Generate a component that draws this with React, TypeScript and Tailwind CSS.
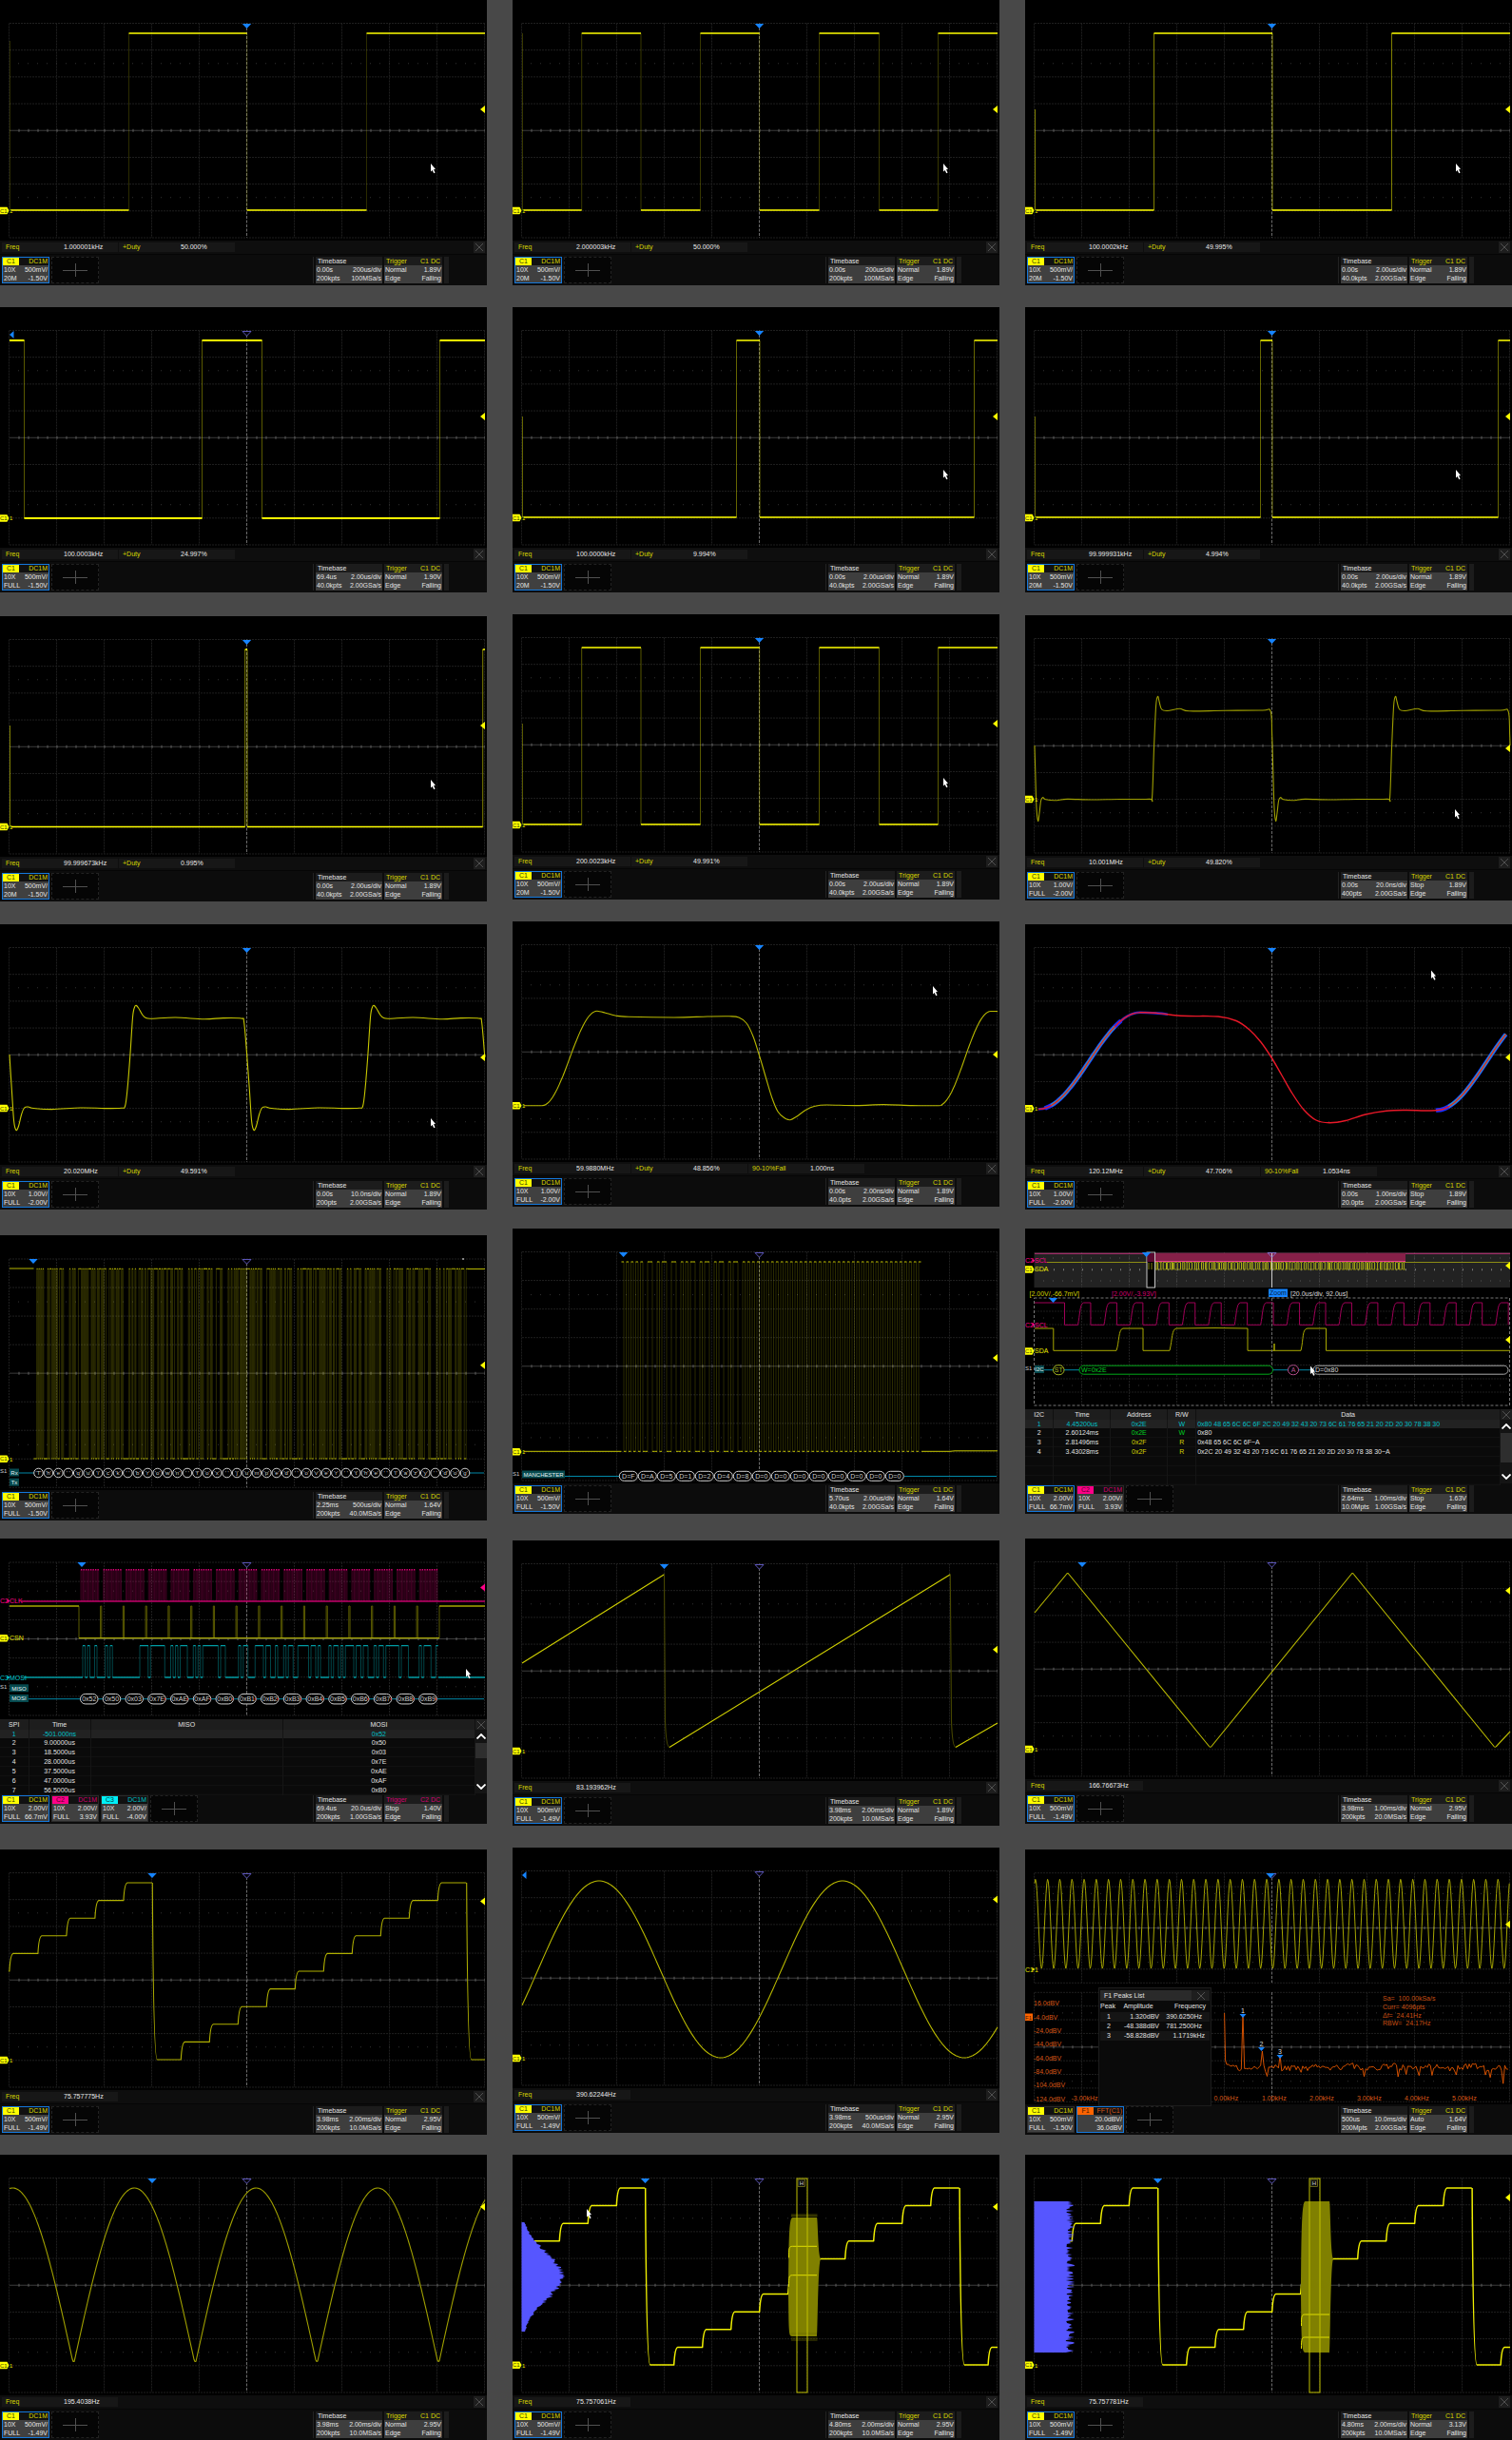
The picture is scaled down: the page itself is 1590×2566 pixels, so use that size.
import React from "react";

type Pt = [number, number];

const LEFT = 10;
const RIGHT = 510;
const MID = 260;
const YELLOW = "#ffff00";
const PINK = "#ff0088";
const CYAN = "#00c8d0";

function rng(seed: number) {
  let s = seed;
  return () => {
    s = (s * 1664525 + 1013904223) % 4294967296;
    return s / 4294967296;
  };
}

const line = (pts: Pt[]) => "M" + pts.map(([x, y]) => `${x.toFixed(1)} ${y.toFixed(1)}`).join("L");

function smooth(pts: Pt[]) {
  let d = `M${pts[0][0]} ${pts[0][1]}`;
  for (let i = 0; i < pts.length - 1; i++) {
    const p0 = pts[Math.max(0, i - 1)];
    const p1 = pts[i];
    const p2 = pts[i + 1];
    const p3 = pts[Math.min(pts.length - 1, i + 2)];
    d += `C${(p1[0] + (p2[0] - p0[0]) / 6).toFixed(1)} ${(p1[1] + (p2[1] - p0[1]) / 6).toFixed(1)} ${(p2[0] - (p3[0] - p1[0]) / 6).toFixed(1)} ${(p2[1] - (p3[1] - p1[1]) / 6).toFixed(1)} ${p2[0].toFixed(1)} ${p2[1].toFixed(1)}`;
  }
  return d;
}

/* ---------- plot furniture ---------- */

function Grid({ top = 24.5, bottom = 250, mid = true }: { top?: number; bottom?: number; mid?: boolean }) {
  const div = (bottom - top) / 8;
  const cy = (top + bottom) / 2;
  return (
    <g fill="none">
      {[0, 1, 2, 3, 5, 6, 7, 8].map((i) => (
        <path key={i} d={`M${LEFT} ${top + i * div}H${RIGHT}`} stroke="#1f1f1f" strokeDasharray="2 1" />
      ))}
      {[0, 1, 2, 3, 4, 6, 7, 8, 9, 10].map((i) => (
        <path key={i} d={`M${LEFT - 0.5 + i * 50} ${top}V${bottom}`} stroke="#1f1f1f" strokeDasharray="2 1" />
      ))}
      {[1.5, 6.5].map((i) => (
        <path key={i} d={`M${LEFT + 9} ${top + i * div}H${RIGHT}`} stroke="#333" strokeDasharray="1 9" />
      ))}
      <path d={`M${LEFT} ${cy}H${RIGHT}`} stroke="#3c3c3c" />
      <path d={`M${LEFT + 9.5} ${cy}H${RIGHT}`} stroke="#606060" strokeWidth="3" strokeDasharray="1 9" />
      {mid && <MidLine y1={top} y2={bottom} />}
    </g>
  );
}

const MidLine = ({ y1, y2 }: { y1: number; y2: number }) => (
  <path d={`M${MID - 0.5} ${y1}V${y2}`} stroke="#6c6c6c" strokeDasharray="3 1.5" fill="none" />
);

const TrigPos = ({ x, y = 25 }: { x: number; y?: number }) => (
  <path d={`M${x - 4.7} ${y}h9.4l-4.7 5z`} fill="#1684ff" />
);
const TrigLeft = ({ y }: { y: number }) => <path d={`M10 ${y}l4.5 -4v8z`} fill="#1684ff" />;
const Delay = ({ x = MID - 0.5, y = 25 }: { x?: number; y?: number }) => (
  <path d={`M${x - 4.5} ${y + 0.5}h9l-4.5 4.7z`} fill="#000" stroke="#5b55b8" />
);
const Level = ({ y, color = YELLOW }: { y: number; color?: string }) => (
  <path d={`M505 ${y}l5 -4v8z`} fill={color} />
);
const Pointer = ({ x, y }: { x: number; y: number }) => (
  <path d={`M${x} ${y}l5 6l-2 .3l1.6 3.2l-1.4 .7l-1.5 -3.2l-1.7 1.5z`} fill="#fff" />
);
const Ground = ({ y, name = "1" }: { y: number; name?: string }) => (
  <g>
    <path d={`M0 ${y - 3.7}h7.5l2 3.7l-2 3.7h-7.5z`} fill={YELLOW} />
    <text x="0" y={y + 2} fontSize="6" fill="#333300">C1</text>
    <text x="10" y={y + 2.4} fontSize={name === "1" ? 6 : 7} fill="#e8e800">{name}</text>
  </g>
);
const Channel = ({ y, tag, name, color }: { y: number; tag: string; name: string; color: string }) => (
  <g fontSize="7" fill={color}>
    <text x="0" y={y + 2.5}>{tag}</text>
    <path d={`M7.5 ${y - 2}l3 2l-3 2z`} />
    <text x="10" y={y + 2.5}>{name}</text>
  </g>
);

/* ---------- traces ---------- */

function Square({ edges, start, high = 35, low = 221, dim = 0.3, width = 1.5, spur = 115 }: { edges: number[]; start: boolean; high?: number; low?: number; dim?: number; width?: number; spur?: number }) {
  let level = start;
  let flats = "";
  let x = start ? LEFT : LEFT + 2;
  for (const e of [...edges, RIGHT]) {
    flats += `M${x} ${level ? high : low}H${e}`;
    x = e;
    level = !level;
  }
  return (
    <g fill="none" stroke={YELLOW}>
      {!start && <path d={`M${LEFT + 0.5} ${spur}V${low}`} strokeOpacity={dim} />}
      <path d={edges.map((e) => `M${e} ${high}V${low}`).join("")} strokeOpacity={dim} />
      <path d={flats} strokeWidth={width} />
    </g>
  );
}

const Trace = ({ d, color = "#b8b800", width = 1.1 }: { d: string; color?: string; width?: number }) => (
  <path d={d} fill="none" stroke={color} strokeWidth={width} strokeLinejoin="round" />
);

const ring20: Pt[] = [
  [-6, 99], [-3, 103], [0, 137], [3, 178], [5, 207], [7.4, 216.5], [10, 212], [13, 200], [16, 193], [20, 192], [26, 193.5], [45, 194.6], [75, 193], [100, 193.6], [118, 193.3], [122, 191], [124.5, 172], [127.3, 137], [130, 97], [132, 87], [133.6, 85.4], [136, 88], [140, 95], [144, 98.6], [150, 99.2], [175, 98], [205, 99.8], [225, 98.6],
];
const ring10: Pt[] = [
  [-1.5, 101], [0, 125], [1.2, 165], [2.4, 203], [4, 216.5], [5.4, 208], [7, 195], [9, 191.6], [12, 193.8], [22, 194.8], [35, 193.4], [60, 194], [90, 193.5], [121, 193.4], [124, 191], [126, 137], [128, 95], [129.8, 85.4], [131.5, 91], [134, 99], [140, 100.5], [153, 98.3], [163, 100.8], [200, 100.3], [240, 100],
];
function ringing(shape: Pt[]) {
  const pts: Pt[] = [];
  for (const base of [9.6, 259.6, 509.6]) for (const [x, y] of shape) if (x + base >= LEFT && x + base <= RIGHT) pts.push([x + base, y]);
  return smooth([[LEFT, 137], ...pts, [RIGHT, 137]]);
}

/* half-cosine ramp from (x0, y0) to (x1, y1), cut at the right border of the grid */
function ramp(x0: number, y0: number, x1: number, y1: number): Pt[] {
  const pts: Pt[] = [];
  for (let i = 0; i <= 16; i++) {
    const x = x0 + ((x1 - x0) * i) / 16;
    if (x <= RIGHT) pts.push([x, (y0 + y1) / 2 + ((y0 - y1) / 2) * Math.cos((Math.PI * i) / 16)]);
  }
  return pts;
}

const pulse60: Pt[] = [
  [12, 193.7], [24, 193.8], ...ramp(31, 193.7, 89, 94.3), [97, 96], [108, 99], [122, 100.3], [170, 101], [205, 100], [228, 99.8], [238, 101], [246, 107], [253, 121], [259.5, 141], [266, 163], [273, 186], [279, 200], [286, 206.8], [292, 208.7], [299, 205], [308, 198.5], [318, 194.3], [330, 193], [362, 193.6], [390, 192.6], [420, 193.6], ...ramp(448, 193.7, 503, 94.5), [510, 94.6],
];
const rise120a = ramp(14, 194.5, 121, 92.8);
const rise120b = ramp(432, 195.7, 539, 92.8);
const pulse120: Pt[] = [
  ...rise120a, [126, 92.8], [140, 93.6], [155, 95.5], [172, 96.5], [203, 97], [222, 101.5], [236, 111], [248, 124], [259, 140], [270, 159], [281, 178], [293, 195], [306, 206], [320, 208.7], [337, 206.5], [358, 200], [380, 196.3], [400, 195.5], [420, 196], ...rise120b,
];

function stairs(drop: number, low = 221, step = 18.6) {
  const y = (k: number) => low - step * k;
  let d = "";
  for (const base of [drop - 330.4, drop, drop + 330.4]) {
    d += `M${base} ${y(10)}Q${base + 1} ${low} ${base + 5} ${low}H${base + 30}`;
    for (let k = 1; k <= 10; k++) {
      const x = base + 30 * k;
      d += `V${y(k - 1)}q1 ${-step + 0.5} 4 ${-step}H${Math.min(x + 30, base + 330.4)}`;
    }
  }
  return d;
}

function sample(f: (x: number) => number, step = 2) {
  const pts: Pt[] = [];
  for (let x = LEFT; x <= RIGHT; x += step) pts.push([x, f(x)]);
  return line(pts);
}

/* ---------- decoded serial frames ---------- */

function Capsule({ x, y, w, h = 10, label, color = "#d0d0d0", size = 7 }: { x: number; y: number; w: number; h?: number; label: string; color?: string; size?: number }) {
  return (
    <g>
      <rect x={x} y={y - h / 2} width={w} height={h} rx={Math.min(w, h) / 2} fill="#000" stroke={color} strokeWidth="1" />
      <text x={x + w / 2} y={y + size * 0.36} textAnchor="middle" fontSize={size} fill={color}>{label}</text>
    </g>
  );
}
const Tag = ({ x, y, w, label }: { x: number; y: number; w: number; label: string }) => (
  <g>
    <rect x={x} y={y - 4} width={w} height="8" fill="#064a4f" />
    <text x={x + w / 2} y={y + 2.2} textAnchor="middle" fontSize="6" fill="#e4f0f0">{label}</text>
  </g>
);
const Bus = ({ y }: { y: number }) => <text x="0" y={y + 2} fontSize="6" fill="#ccc">S1</text>;

function bitTrace(bits: number[], x0: number, w: number, high: number, low: number) {
  const flats: string[] = [];
  const edges: string[] = [];
  bits.forEach((b, i) => {
    const x = x0 + i * w;
    flats.push(`M${x.toFixed(1)} ${b ? high : low}h${w.toFixed(2)}`);
    if (i > 0 && bits[i - 1] !== b) edges.push(`M${x.toFixed(1)} ${high}V${low}`);
  });
  return { flats: flats.join(""), edges: edges.join("") };
}

function UartPlot() {
  const text = "The quick brown fox jumped over the lazy dog";
  const pitch = 10.43;
  const bits: number[] = [];
  for (const ch of text) {
    bits.push(0);
    for (let i = 0; i < 8; i++) bits.push((ch.charCodeAt(0) >> i) & 1);
    bits.push(1);
  }
  const t = bitTrace(bits.slice(0, -2), 35.5, pitch / 10, 35.3, 235);
  return (
    <>
      <Grid top={25} bottom={265.3} />
      <path d={t.edges} stroke={YELLOW} strokeOpacity="0.17" fill="none" />
      <path d={t.flats} stroke="#d0d000" fill="none" />
      <path d="M10 35H35.5M492 35.5H510" stroke="#b8b800" fill="none" />
      <path d="M487 24V26" stroke="#fff" />
      <TrigPos x={35} /><Delay /><Level y={136.7} /><Ground y={235.3} />
      <path d="M20 250H36M493 250H509" stroke="#0088a8" fill="none" />
      <Bus y={248} />
      <Tag x={10} y={249.5} w={10} label="Rx" />
      <Tag x={10} y={259.7} w={10} label="Tx" />
      {[...text].map((ch, i) => (
        <Capsule key={i} x={35.7 + i * pitch} y={250} w={9.6} h={9.6} label={`'${ch}'`} size={6} />
      ))}
    </>
  );
}

function ManchesterPlot() {
  const nibbles = "FA5124800000000";
  const bits: number[] = [];
  for (const n of nibbles + "0") {
    const v = parseInt(n, 16);
    for (let i = 3; i >= 0; i--) ((v >> i) & 1 ? [1, 0] : [0, 1]).forEach((b) => bits.push(b));
  }
  const t = bitTrace(bits.slice(0, 126), 114.5, 2.5, 35, 234.3);
  return (
    <>
      <Grid top={24.5} bottom={265} mid={false} />
      <MidLine y1={25} y2={255} />
      <path d={t.edges} stroke={YELLOW} strokeOpacity="0.17" fill="none" />
      <path d={t.flats} stroke="#c8c800" fill="none" />
      <path d="M12 234.3H114.5M430 234.3H460L465 233.8H510" stroke="#c8c800" fill="none" />
      <TrigPos x={116.6} /><Delay /><Level y={136} /><Ground y={234.7} />
      <path d="M54 260.5H112M412 260.5H509" stroke="#0088a8" fill="none" />
      <Bus y={258} />
      <Tag x={10} y={258.5} w={45} label="MANCHESTER" />
      {[...nibbles].map((n, i) => (
        <Capsule key={i} x={112.3 + i * 20} y={260.3} w={19} label={`D=${n}`} />
      ))}
    </>
  );
}

function I2cPlot() {
  const rand = rng(7);
  let burst = "";
  for (let x = 138; x < 399; x += 1 + rand() * 2.4) burst += `M${x.toFixed(1)} 35.5V43`;
  let clock = "M10 78H41.5";
  for (let i = 0; i < 17; i++) {
    const x = 41.5 + i * 27.45;
    clock += `V101.3H${x + 14}C${x + 16} 92 ${x + 16} 78.5 ${x + 20} 78H${Math.min(x + 27.45, RIGHT)}`;
  }
  clock += "V101.3";
  return (
    <>
      <rect x="9.5" y="25" width="500.5" height="37" fill="#222" />
      {[1, 2, 3, 4, 6, 7, 8, 9].map((i) => (
        <path key={i} d={`M${9.5 + i * 50} 25V62`} stroke="#383838" strokeDasharray="2 1" />
      ))}
      <path d="M19 31H510M19 55H510" stroke="#555" strokeDasharray="1 9" fill="none" />
      <path d="M10 43.3H510" stroke="#777" strokeWidth="2" strokeDasharray="1 9" fill="none" />
      <path d="M10 26.3H510" stroke="#c03078" fill="none" />
      <rect x="128" y="26" width="272" height="8.5" fill="#852048" />
      <path d="M128 34.5H400" stroke="#e83c90" fill="none" />
      <path d="M23 35.5H128M400 35.5H510" stroke="#8c8c14" fill="none" />
      <path d={burst} stroke="#b0b018" strokeWidth="1" fill="none" />
      <path d="M137 35.5H400M137 43H400" stroke="#8c8c14" strokeDasharray="3 1" fill="none" />
      <path d="M259.5 25V62" stroke="#ccc" />
      <rect x="128" y="25" width="8.5" height="37" fill="#000" stroke="#c8c8c8" />
      <rect x="128.5" y="26" width="7.5" height="9" fill="#5a0830" />
      <path d="M130 36V43M133 36V43" stroke="#80800c" />
      <TrigPos x={127.5} />
      <path d="M255 25.5h9l-4.5 4.700z" fill="none" stroke="#8070c8" />
      <Channel y={33.7} tag="C2" name="SCL" color={PINK} />
      <Ground y={43} name="SDA" /><Level y={39} />

      <text x="4.5" y="70.5" fontSize="7" fill="#d4d400">[2.00V/,-66.7mV]</text>
      <text x="91" y="70.5" fontSize="7" fill="#d00070">[2.00V/,-3.93V]</text>
      <rect x="256" y="63.5" width="20" height="8.5" fill="#1684ff" />
      <text x="266" y="70.3" fontSize="7" textAnchor="middle" fill="#001c40">Zoom</text>
      <text x="279" y="70.5" fontSize="7" fill="#ddd">[20.0us/div, 92.0us]</text>

      {[1, 2, 3, 4, 6, 7, 8, 9].map((i) => (
        <path key={i} d={`M${9.5 + i * 50} 73V186`} stroke="#1f1f1f" strokeDasharray="2 1" />
      ))}
      {[87, 101, 115, 143.5, 158, 172].map((y) => (
        <path key={y} d={`M10 ${y}H510`} stroke="#1c1c1c" strokeDasharray="2 1" />
      ))}
      <path d="M19 94H510M19 165H510" stroke="#333" strokeDasharray="1 9" fill="none" />
      <rect x="9.5" y="73" width="500" height="113" fill="none" stroke="#777" strokeDasharray="3 2" />
      <path d={clock} stroke="#a00058" fill="none" />
      <path d="M10 105H29.8V128.3H96C99 120 98 105.5 103 105H124V128.3H152C155 116 154 106 159 105L200 104.5L234 105V128.3H262V121V128.3H290C293 116 291 105.5 297 105H316.5V128.3H510" stroke="#a8a800" fill="none" />
      <MidLine y1={73} y2={186} />
      <TrigPos x={29.5} y={73} />
      <Channel y={101} tag="C2" name="SCL" color={PINK} />
      <Ground y={129} name="SDA" /><Level y={117} />

      <path d="M19 148.7H304" stroke="#0088a8" fill="none" />
      <Bus y={147} />
      <Tag x={10} y={148} w={10} label="I2C" />
      <Capsule x={29.5} y={148.7} w={11.5} label="ST" color="#a8b820" />
      <rect x="57" y="144.2" width="203.5" height="9" rx="4.5" fill="#000" stroke="#00a818" />
      <text x="59" y="151.2" fontSize="7" fill="#00d020">W=0x2E</text>
      <Capsule x={276.5} y={148.7} w={11} label="A" color="#b85090" />
      <rect x="303" y="144.2" width="205" height="9" rx="4.5" fill="#000" stroke="#aaa" />
      <text x="305" y="151.2" fontSize="7" fill="#ddd">D=0x80</text>
      <Pointer x={300} y={144.5} />
    </>
  );
}

const spiBytes = ["52", "50", "03", "7E", "AE", "AF", "B0", "B1", "B2", "B3", "B4", "B5", "B6", "B7", "B8", "B9"];

function SpiPlot() {
  const pitch = 23.75;
  let clkEdges = "";
  let clkTops = "";
  let cs = "M83 71V104.7";
  let flats = "M25 146H86";
  let edges = "";
  let last = 0;
  spiBytes.forEach((hex, i) => {
    const x = 85 + i * pitch;
    for (let k = 0; k < 8; k++) {
      clkEdges += `M${x + k * 2.5} 32.7V66M${x + 1.2 + k * 2.5} 32.7V66`;
      clkTops += `M${x + k * 2.5} 32.7h1.3`;
      const bit = (parseInt(hex, 16) >> (7 - k)) & 1;
      const bx = x + k * 2.5 - 0.5;
      if (bit !== last) edges += `M${bx} 112.7V146`;
      flats += `M${bx} ${bit ? 112.7 : 146}h2.5`;
      last = bit;
    }
    if (i < 15) {
      flats += `M${x + 19.5} ${last ? 112.7 : 146}h4`;
      cs += `M${x + 20.6} 104.7V71H${x + 21.8}V104.7`;
    }
  });
  return (
    <>
      <Grid top={25} bottom={186} />
      <path d={clkEdges} stroke={PINK} strokeOpacity="0.24" fill="none" />
      <path d={clkTops} stroke="#e00078" strokeWidth="1.5" fill="none" />
      <path d="M22 66H510" stroke="#c00068" strokeWidth="1.5" fill="none" />
      <path d={cs + "M462 104.7V71"} stroke="#5c5c00" fill="none" />
      <path d="M10 71H83M83 104.7H462M462 71H510" stroke="#a8a800" strokeWidth="1.3" fill="none" />
      <path d={edges} stroke={CYAN} strokeOpacity="0.35" fill="none" />
      <path d={flats + "M461 146H510"} stroke="#009ca4" strokeWidth="1.3" fill="none" />
      <TrigPos x={86} /><Delay /><Level y={51.5} color={PINK} />
      <Channel y={65.7} tag="C2" name="CLK" color={PINK} />
      <Ground y={104.7} name="CSN" />
      <Channel y={146} tag="C3" name="MOSI" color={CYAN} />
      <path d="M30 168.7H509" stroke="#0088a8" fill="none" />
      <Bus y={156.3} />
      <Tag x={10} y={157.3} w={20} label="MISO" />
      <Tag x={10} y={168} w={20} label="MOSI" />
      {spiBytes.map((b, i) => (
        <g key={b}>
          <Capsule x={84.5 + i * pitch} y={168.7} w={18.5} h={10.5} label={`0x${b}`} />
          {i > 2 && <rect x={101.5 + i * pitch} y="168" width="1.5" height="1.5" fill="#e02020" />}
        </g>
      ))}
      <Pointer x={490} y={137} />
    </>
  );
}

function FftPlot() {
  const rand = rng(21);
  const pts: Pt[] = [[209.6, 172], [210.6, 222]];
  for (let x = 212; x < 509; x += 1.7) {
    let y = 229 + Math.sin(x / 7) * 1.5 + (rand() - 0.5) * 6;
    if (rand() > 0.92) y += 4 + rand() * 10;
    for (const [px, py] of [[229, 174], [248.6, 212], [268, 217]]) if (Math.abs(x - px) < 0.86) y = py;
    pts.push([x, y]);
  }
  const yl = ["16.0dBV", "-4.0dBV", "-24.0dBV", "-44.0dBV", "-64.0dBV", "-84.0dBV", "-104.0dBV", "-124.0dBV"];
  const xl: [number, string][] = [[48.5, "-3.00kHz"], [198.5, "0.00kHz"], [249, "1.00kHz"], [299, "2.00kHz"], [349, "3.00kHz"], [399, "4.00kHz"], [449, "5.00kHz"]];
  const info = ["Sa=  100.00kSa/s", "Curr= 4096pts", "Δf=  24.41Hz", "RBW=  24.17Hz"];
  return (
    <>
      <Grid top={24.7} bottom={140.3} mid={false} />
      <Grid top={150.3} bottom={265.3} mid={false} />
      <MidLine y1={25} y2={140} /><MidLine y1={150} y2={265} />
      <Trace d={sample((x) => 78.2 - 47 * Math.cos(((x - 10.9) * 2 * Math.PI) / 12.8), 0.8)} color="#a4a400" width={1} />
      <Delay /><TrigPos x={258} /><Level y={78.7} />
      <Channel y={126} tag="C1" name="1" color="#e8e800" />
      <rect x="0" y="172.5" width="8" height="7.5" fill="#ff6400" />
      <text x="0" y="178.5" fontSize="6" fill="#401800">F1</text>
      <g fill="#d85818" fontSize="7">
        {yl.map((l, i) => <text key={l} x="9" y={164.2 + i * 14.33}>{l}</text>)}
        {xl.map(([x, l]) => <text key={l} x={x} y="263.5">{l}</text>)}
        {info.map((l, i) => <text key={l} x="376" y={159.3 + i * 8.6} className="whitespace-pre" fill="#c85014">{l}</text>)}
      </g>
      <Trace d={line(pts)} color="#e85800" width={0.9} />
      {([[229, 173], [248.5, 208], [268, 216]] as Pt[]).map(([x, y], i) => (
        <g key={i}>
          <path d={`M${x - 3.5} ${y}h7l-3.5 4z`} fill="#1684ff" />
          <text x={x} y={y - 1} textAnchor="middle" fontSize="7" fill="#ddd">{i + 1}</text>
        </g>
      ))}
    </>
  );
}

function HistogramPlot({ uniform }: { uniform: boolean }) {
  const rand = rng(uniform ? 5 : 9);
  const top = uniform ? 49 : 71;
  const bottom = uniform ? 208 : 186;
  let bars = `M9.5 ${top}`;
  for (let y = top; y <= bottom; y += 1) {
    const w = uniform ? (y === top ? 39 : 33 + rand() * 10) : Math.exp(-((y - 128) ** 2) / 1200) * (38 + rand() * 8) + rand() * 1.5;
    bars += `L${(9.5 + w).toFixed(1)} ${y}`;
  }
  bars += `L9.5 ${bottom}z`;
  const t = uniform ? 49 : 66;
  const b = uniform ? 208 : 191;
  const marks = uniform ? [168, 192] : [96.3, 126.7];
  const clip = uniform ? "steps-uniform" : "steps-gauss";
  const from = uniform ? 46 : 21;
  const [x0, x1] = [290.5, 321];
  return (
    <>
      <Grid />
      <clipPath id={clip}>
        <path d={`M${from} 20H${x0}V255H${from}zM${x1} 20H510V255H${x1}z`} />
      </clipPath>
      <g clipPath={`url(#${clip})`}>
        <Trace d={stairs(139.7)} color="#f0f000" width={1.5} />
      </g>
      <path d={`M${x0 - 0.5} 147C${x0} 90 ${x0} ${t} ${x0 + 4} ${t}H${x1 - 1}C${x1} ${t} ${x1} 105 ${x1 + 3} 109.7C${x1} 114 ${x1} ${b} ${x1 - 1} ${b}H${x0 + 4}C${x0} ${b} ${x0} 190 ${x0 - 0.5} 147z`} fill="#808000" />
      {!uniform && <path d="M293 63H320.5M293 64.5H320.5M293 193H320.5M293 195H320.5M293 188H320" stroke="#6c6c00" strokeWidth="0.7" fill="none" />}
      {marks.map((y) => (
        <path key={y} d={`M${x0} ${y + 12}C${x0} ${y + 2} ${x0} ${y} ${x0 + 4} ${y}H${x1 - 1}`} stroke="#e0e000" fill="none" />
      ))}
      <rect x="299" y="25" width="11" height="225" fill="none" stroke="#c0c000" />
      <rect x="300" y="26" width="7.5" height="7.5" fill="#111" stroke="#888820" strokeWidth="0.7" />
      <text x="303.8" y="32" textAnchor="middle" fontSize="6" fill="#ccc">H</text>
      <path d={bars} fill="#5656ff" />
      <TrigPos x={139.5} /><Delay /><Level y={uniform ? 45 : 54.7} /><Ground y={221.3} />
      {!uniform && <Pointer x={78} y={57} />}
    </>
  );
}

/* ---------- read-outs under the plot ---------- */

type Chan = { id: string; color: string; ink: string; coupling: string; rows: [string, string][]; active?: boolean };

const ch = (limit: string, scale: string, offset: string, active = true): Chan => ({ id: "C1", color: "bg-[#ffff00] text-[#333300]", ink: "text-[#d8d800]", coupling: "DC1M", rows: [["10X", scale], [limit, offset]], active });

const Row = ({ a, b }: { a: string; b: string }) => (
  <span className="flex justify-between px-px">
    <span>{a}</span>
    <span>{b}</span>
  </span>
);

type BarProps = { channels: Chan[]; time: [string, string, string, string]; trig: [string, string]; pinkTrigger?: boolean };

function BottomBar({ channels, time, trig, pinkTrigger }: BarProps) {
  const ink = pinkTrigger ? "text-[#d00070]" : "text-[#d8d800]";
  return (
    <div className="flex h-8 items-start gap-[2px] bg-[#0c0c0c] pt-[2px] pl-[2px] leading-[9px] text-[#e4e4e4]">
      {channels.map((c) => (
        <button key={c.id} className={`h-7 w-[50px] shrink-0 border text-left ${c.active ? "border-[#1478dc]" : "border-[#2a2a2a]"}`}>
          <span className="flex h-2 items-center justify-between bg-[#111]">
            <span className={`block h-2 w-[17px] text-center leading-[8px] ${c.color}`}>{c.id}</span>
            <span className={`pr-px text-right leading-[8px] ${c.ink}`}>{c.coupling}</span>
          </span>
          <span className="block bg-[#404040]">
            <Row a={c.rows[0][0]} b={c.rows[0][1]} />
            <Row a={c.rows[1][0]} b={c.rows[1][1]} />
          </span>
        </button>
      ))}
      <button aria-label="Add channel" className="flex h-7 w-[50px] shrink-0 items-center justify-center border border-dashed border-[#222] bg-[#050505]">
        <svg viewBox="0 0 26 14" className="h-[14px] w-[26px]" stroke="#505050" fill="none">
          <path d="M0 7.5H26M13.5 0V14" />
        </svg>
      </button>
      <div className="mr-[40px] ml-auto flex h-7 gap-[2px] border-l border-[#222] pl-[2px]">
        <button className="flex w-[70px] flex-col bg-[#1c1c1c] text-left">
          <span className="w-full px-[2px]">Timebase</span>
          <span className="block w-full bg-[#3e3e3e] pb-px">
            <Row a={time[0]} b={time[1]} />
            <Row a={time[2]} b={time[3]} />
          </span>
        </button>
        <button className="flex w-[61px] flex-col bg-[#1c1c1c] text-left">
          <span className={`flex w-full justify-between px-[2px] ${ink}`}>
            <span>Trigger</span>
            <span>{pinkTrigger ? "C2 DC" : "C1 DC"}</span>
          </span>
          <span className="block w-full bg-[#3e3e3e] pb-px">
            <Row a={trig[0]} b={trig[1]} />
            <Row a="Edge" b="Falling" />
          </span>
        </button>
        <span className="w-[5px] bg-[#1c1c1c]" />
      </div>
    </div>
  );
}

const CloseButton = ({ className }: { className: string }) => (
  <button aria-label="Close" className={`flex items-center justify-center bg-[#1e1e1e] ${className}`}>
    <svg viewBox="0 0 8 8" className="size-2" stroke="#505050" fill="none">
      <path d="M0 0L8 8M8 0L0 8" />
    </svg>
  </button>
);

function Measures({ items }: { items: [string, string][] }) {
  return (
    <div className="flex h-[15px] items-center gap-px border-b border-[#060606] bg-[#0e0e0e] pl-[2px] leading-[10px]">
      {items.map(([name, value]) => (
        <div key={name} className="flex h-[10px] w-[122px] bg-[#171717]">
          <span className="w-[65px] pl-1 text-[#d8d800]">{name}</span>
          <span className="text-[#e8e8e8]">{value}</span>
        </div>
      ))}
      <CloseButton className="mr-[2px] ml-auto h-3 w-3" />
    </div>
  );
}

function FrameTable({ heads, widths, rows }: { heads: string[]; widths: string[]; rows: React.ReactNode[][] }) {
  const filled = [...rows, ...Array.from({ length: 7 - rows.length }, () => heads.map(() => "\u00a0"))];
  const last = heads.length - 1;
  return (
    <div className="flex h-[78px] bg-[#0a0a0a]">
      <table className="h-full flex-1 table-fixed border-collapse text-center leading-[9px] text-[#e0e0e0]">
        <colgroup>{widths.map((w, i) => <col key={i} className={w} />)}</colgroup>
        <thead>
          <tr className="h-[11px] bg-[#1d1d1d]">
            {heads.map((h) => <th key={h} className="border-r border-[#101010] p-0 font-normal">{h}</th>)}
          </tr>
        </thead>
        <tbody>
          {filled.map((r, i) => (
            <tr key={i} className={i === 0 ? "bg-[#222] text-[#00c0c8]" : "border-b border-[#111]"}>
              {r.map((c, k) => (
                <td key={k} className={`border-r border-[#151515] p-0 whitespace-nowrap ${k === last && last === 4 ? "pl-px text-left" : ""}`}>{c}</td>
              ))}
            </tr>
          ))}
        </tbody>
      </table>
      <div className="flex w-[12px] flex-col items-center bg-[#141414]">
        <CloseButton className="h-[11px] w-full" />
        <svg viewBox="0 0 10 6" className="my-1 h-[6px] w-[10px]" stroke="#fff" strokeWidth="1.8" fill="none"><path d="M0.5 5.5L5 1L9.5 5.5" /></svg>
        <span className={`w-full bg-[#2e2e2e] ${last === 4 ? "h-[31px]" : "h-[16px]"}`} />
        <svg viewBox="0 0 10 6" className="mt-auto mb-1 h-[6px] w-[10px]" stroke="#fff" strokeWidth="1.8" fill="none"><path d="M0.5 0.5L5 5L9.5 0.5" /></svg>
      </div>
    </div>
  );
}

function PeaksList() {
  const rows = [["1", "1.320dBV", "390.6250Hz"], ["2", "-48.388dBV", "781.2500Hz"], ["3", "-58.828dBV", "1.1719kHz"]];
  return (
    <section className="absolute top-[145px] left-[77px] h-[125px] w-[119px] border border-[#1c1c1c] bg-[#0a0a0a] p-px pt-[2px] leading-[10px] text-[#e0e0e0]">
      <header className="flex h-[11px] items-center bg-[#2a2a2a] pl-1">
        <h2>F1 Peaks List</h2>
        <CloseButton className="ml-auto h-full w-[19px]" />
      </header>
      <table className="w-full text-right">
        <thead>
          <tr className="h-3">
            <th className="w-[18px] p-0 text-left font-normal">Peak</th>
            <th className="w-[44px] p-0 text-center font-normal">Amplitude</th>
            <th className="p-0 pr-[4px] font-normal">Frequency</th>
          </tr>
        </thead>
        <tbody>
          {rows.map((r, i) => (
            <tr key={r[0]} className={i % 2 ? "" : "bg-[#151515]"}>
              <td className="p-0 text-center">{r[0]}</td>
              <td className="p-0">{r[1]}</td>
              <td className={i === 2 ? "p-0 pr-[5px]" : "p-0 pr-2"}>{r[2]}</td>
            </tr>
          ))}
        </tbody>
      </table>
    </section>
  );
}

/* ---------- one captured screen ---------- */

type ScopeProps = BarProps & { gap?: string; height?: number; plot: React.ReactNode; measures?: [string, string][]; table?: React.ReactNode; overlay?: React.ReactNode };

function Scope({ gap = "", height = 253, plot, measures, table, overlay, ...bar }: ScopeProps) {
  return (
    <article className={`relative bg-black ${gap}`}>
      <svg viewBox={`0 0 512 ${height}`} className="block w-full">{plot}</svg>
      {measures && <Measures items={measures} />}
      {table}
      <BottomBar {...bar} />
      {overlay}
    </article>
  );
}

const base = (extra: React.ReactNode, level = 115, ground = 221.5) => (
  <>
    <Grid />
    {extra}
    <Ground y={ground} />
    <Level y={level} />
  </>
);
const centred = <TrigPos x={MID - 0.5} />;

const fd = (f: string, d: string): [string, string][] => [["Freq", f], ["+Duty", d]];
const f1 = (f: string): [string, string][] => [["Freq", f]];
const m20 = [ch("20M", "500mV/", "-1.50V")];
const full150 = [ch("FULL", "500mV/", "-1.50V")];
const full149 = [ch("FULL", "500mV/", "-1.49V")];
const full200 = [ch("FULL", "1.00V/", "-2.00V")];
const pinkChan: Chan = { id: "C2", color: "bg-[#ff0088] text-[#500028]", ink: "text-[#d00070]", coupling: "DC1M", rows: [["10X", "2.00V/"], ["FULL", "3.93V"]] };
const cyanChan: Chan = { id: "C3", color: "bg-[#00f0f8] text-[#004044]", ink: "text-[#00c0c8]", coupling: "DC1M", rows: [["10X", "2.00V/"], ["FULL", "-4.00V"]] };
const fftChan: Chan = { id: "F1", color: "bg-[#ff6400] text-[#401800]", ink: "text-[#d85818]", coupling: "FFT(C1)", rows: [["", "20.0dBV/"], ["", "36.0dBV"]], active: true };
const normal = (v: string): [string, string] => ["Normal", v];
const fast: [string, string, string, string] = ["0.00s", "2.00us/div", "40.0kpts", "2.00GSa/s"];
const halfPeriods = [72.7, 135, 197.5, 259.7, 322.5, 385.5, 447.5];

export default function App() {
  return (
    <main className="grid grid-cols-3 items-start gap-x-[27px] bg-[#484848] font-['Liberation_Sans',Arial,sans-serif] text-[7px]">
      <div className="flex flex-col">
        <Scope
          plot={base(<><Square start={false} edges={[135.5, 259.7, 385.5]} dim={0.17} spur={43} />{centred}<Pointer x={453} y={172} /></>)}
          measures={fd("1.000001kHz", "50.000%")} channels={m20} time={["0.00s", "200us/div", "200kpts", "100MSa/s"]} trig={normal("1.89V")} />
        <Scope gap="mt-[23px]"
          plot={base(<><Square start edges={[25.5, 212.5, 275.5, 462.5]} dim={0.35} low={222} width={2} /><TrigLeft y={29} /><Delay /></>, 115, 222)}
          measures={fd("100.0003kHz", "24.997%")} channels={full150} time={["69.4us", "2.00us/div", "40.0kpts", "2.00GSa/s"]} trig={normal("1.90V")} />
        <Scope gap="mt-[25px]"
          plot={base(<><Square start={false} edges={[257.7, 260, 507.7]} dim={0.5} low={221.5} />{centred}<Pointer x={453} y={172} /></>)}
          measures={fd("99.999673kHz", "0.995%")} channels={m20} time={fast} trig={normal("1.89V")} />
        <Scope gap="mt-[24px]"
          plot={base(<><Trace d={ringing(ring20)} color="#c8c800" />{centred}<Pointer x={453} y={204} /></>, 140, 193.5)}
          measures={fd("20.020MHz", "49.591%")} channels={full200} time={["0.00s", "10.0ns/div", "200pts", "2.00GSa/s"]} trig={normal("1.89V")} />
        <Scope gap="mt-[27px]" height={268} plot={<UartPlot />} channels={full150} time={["2.25ms", "500us/div", "200kpts", "40.0MSa/s"]} trig={normal("1.64V")} />
        <Scope gap="mt-[19px]" height={190} plot={<SpiPlot />} pinkTrigger
          table={
            <FrameTable heads={["SPI", "Time", "MISO", "MOSI"]} widths={["w-[30px]", "w-[65px]", "w-[202px]", "w-[202px]"]}
              rows={["-501.000ns", "9.00000us", "18.5000us", "28.0000us", "37.5000us", "47.0000us", "56.5000us"].map((t, i) => [String(i + 1), t, "", `0x${spiBytes[i]}`])} />
          }
          channels={[ch("FULL", "2.00V/", "66.7mV"), pinkChan, cyanChan]} time={["69.4us", "20.0us/div", "200kpts", "1.00GSa/s"]} trig={["Stop", "1.40V"]} />
        <Scope gap="mt-[27px]"
          plot={base(<><Trace d={stairs(160.3)} color="#b0b000" /><rect x="0" y="24" width="9" height="228" /><rect x="510" y="24" width="2" height="228" /><TrigPos x={160} /><Delay /></>, 54.5)}
          measures={f1("75.757775Hz")} channels={full149} time={["3.98ms", "2.00ms/div", "200kpts", "10.0MSa/s"]} trig={normal("2.95V")} />
        <Scope gap="mt-[21px]"
          plot={base(<><Trace d={sample((x) => Math.min(217.5, 221 - 186 * Math.abs(Math.cos(((x - 13.4) * Math.PI) / 127.9))), 1)} color="#a0a000" /><TrigPos x={160} /><Delay /></>, 54.8)}
          measures={f1("195.4038Hz")} channels={full149} time={["3.98ms", "2.00ms/div", "200kpts", "10.0MSa/s"]} trig={normal("2.95V")} />
      </div>

      <div className="flex flex-col">
        <Scope
          plot={base(<><Square start={false} edges={halfPeriods} dim={0.22} spur={35} />{centred}<Pointer x={453} y={172} /></>)}
          measures={fd("2.000003kHz", "50.000%")} channels={m20} time={["0.00s", "200us/div", "200kpts", "100MSa/s"]} trig={normal("1.89V")} />
        <Scope gap="mt-[23px]"
          plot={base(<><Square start={false} edges={[235.5, 260, 485.5]} dim={0.4} />{centred}<Pointer x={453} y={171} /></>)}
          measures={fd("100.0000kHz", "9.994%")} channels={m20} time={fast} trig={normal("1.89V")} />
        <Scope gap="mt-[23px]"
          plot={base(<><Square start={false} edges={halfPeriods} dim={0.35} />{centred}<Pointer x={453} y={172} /></>)}
          measures={fd("200.0023kHz", "49.991%")} channels={m20} time={fast} trig={normal("1.89V")} />
        <Scope gap="mt-[23px]"
          plot={base(<><Trace d={smooth(pulse60)} />{centred}<Pointer x={442} y={68} /></>, 140, 193.7)}
          measures={[["Freq", "59.9880MHz"], ["+Duty", "48.856%"], ["90-10%Fall", "1.000ns"]]} channels={full200} time={["0.00s", "2.00ns/div", "40.0pts", "2.00GSa/s"]} trig={normal("1.89V")} />
        <Scope gap="mt-[23px]" height={268} plot={<ManchesterPlot />} channels={full150} time={["5.70us", "2.00us/div", "40.0kpts", "2.00GSa/s"]} trig={normal("1.64V")} />
        <Scope gap="mt-[28px]"
          plot={base(<><Trace d="M10 129L159.5 35.7M165 217.5L460.3 35.7M466 217.5L510 192" color="#d0d000" /><Trace d="M159.5 35.7L160.5 190Q161.5 217.5 165 217.5M460.3 35.7L461.5 190Q462.5 217.5 466 217.5" color="#484800" /><TrigPos x={159.5} /><Delay /></>, 114.7)}
          measures={f1("83.193962Hz")} channels={full149} time={["3.98ms", "2.00ms/div", "200kpts", "10.0MSa/s"]} trig={normal("1.89V")} />
        <Scope gap="mt-[23px]"
          plot={base(<><Trace d={sample((x) => 128 - 93 * Math.cos(((x - 91) * Math.PI) / 128), 2)} /><TrigLeft y={29} /><Delay /></>, 54.5)}
          measures={f1("390.62244Hz")} channels={full149} time={["3.98ms", "500us/div", "200kpts", "40.0MSa/s"]} trig={normal("2.95V")} />
        <Scope gap="mt-[23px]" plot={<HistogramPlot uniform={false} />}
          measures={f1("75.757061Hz")} channels={full149} time={["4.80ms", "2.00ms/div", "200kpts", "10.0MSa/s"]} trig={normal("2.95V")} />
      </div>

      <div className="flex flex-col">
        <Scope
          plot={base(<><Square start={false} edges={[135.5, 260, 385.5]} dim={0.5} />{centred}<Pointer x={453} y={172} /></>)}
          measures={fd("100.0002kHz", "49.995%")} channels={m20} time={fast} trig={normal("1.89V")} />
        <Scope gap="mt-[23px]"
          plot={base(<><Square start={false} edges={[247.5, 260, 497.5]} dim={0.4} />{centred}<Pointer x={453} y={171} /></>)}
          measures={fd("99.999931kHz", "4.994%")} channels={m20} time={fast} trig={normal("1.89V")} />
        <Scope gap="mt-[24px]"
          plot={base(<><Trace d={ringing(ring10)} color="#a0a000" />{centred}<Pointer x={452} y={204} /></>, 140, 193.5)}
          measures={fd("10.001MHz", "49.820%")} channels={full200} time={["0.00s", "20.0ns/div", "400pts", "2.00GSa/s"]} trig={["Stop", "1.89V"]} />
        <Scope gap="mt-[25px]"
          plot={base(<>
            <Trace d={smooth([...rise120a, [140, 93.6], [150, 94.7]])} color="#2028e0" width={2.6} />
            <Trace d={smooth(rise120a.slice(1, 14))} color="#1830ff" width={4.6} />
            <Trace d={smooth(rise120b)} color="#1830ff" width={4.6} />
            <Trace d={smooth(rise120a.slice(2, 13))} color="#20b8b8" width={3} />
            <Trace d={smooth(rise120b.slice(2))} color="#20b8b8" width={3} />
            <Trace d={smooth(pulse120)} color="#e81828" width={1.4} />
            {centred}<Pointer x={427} y={48.5} />
          </>, 140, 193.7)}
          measures={[["Freq", "120.12MHz"], ["+Duty", "47.706%"], ["90-10%Fall", "1.0534ns"]]} channels={full200} time={["0.00s", "1.00ns/div", "20.0pts", "2.00GSa/s"]} trig={["Stop", "1.89V"]} />
        <Scope gap="mt-[20px]" height={190} plot={<I2cPlot />}
          table={
            <FrameTable heads={["I2C", "Time", "Address", "R/W", "Data"]} widths={["w-[30px]", "w-[60px]", "w-[60px]", "w-[30px]", "w-[320px]"]}
              rows={[
                ["1", "4.45200us", "0x2E", "W", "0x80 48 65 6C 6C 6F 2C 20 49 32 43 20 73 6C 61 76 65 21 20 2D 20 30 78 38 30"],
                ["2", "2.60124ms", <span className="text-[#00d020]">0x2E</span>, <span className="text-[#00d020]">W</span>, "0x80"],
                ["3", "2.81496ms", <span className="text-[#d4d400]">0x2F</span>, <span className="text-[#d4d400]">R</span>, "0x48 65 6C 6C 6F~A"],
                ["4", "3.43028ms", <span className="text-[#d4d400]">0x2F</span>, <span className="text-[#d4d400]">R</span>, "0x2C 20 49 32 43 20 73 6C 61 76 65 21 20 2D 20 30 78 38 30~A"],
              ]} />
          }
          channels={[ch("FULL", "2.00V/", "66.7mV"), pinkChan]} time={["2.64ms", "1.00ms/div", "10.0Mpts", "1.00GSa/s"]} trig={["Stop", "1.63V"]} />
        <Scope gap="mt-[26px]"
          plot={base(<><Trace d="M10 78L43.5 37.5Q44.7 35.5 46 37.5L193.5 218.5Q194.8 220 196 218.5L343 37.5Q344.2 35.5 345.5 37.5L493 218.5Q494.3 220 495.5 218.5L510 203" /><TrigPos x={60} /><Delay /></>, 54.8)}
          measures={f1("166.76673Hz")} channels={full149} time={["3.98ms", "1.00ms/div", "200kpts", "20.0MSa/s"]} trig={normal("2.95V")} />
        <Scope gap="mt-[27px]" height={268} plot={<FftPlot />} overlay={<PeaksList />}
          channels={[ch("FULL", "500mV/", "-1.50V", false), fftChan]} time={["500us", "10.0ms/div", "200Mpts", "2.00GSa/s"]} trig={["Auto", "1.64V"]} />
        <Scope gap="mt-[21px]" plot={<HistogramPlot uniform />}
          measures={f1("75.757781Hz")} channels={full149} time={["4.80ms", "2.00ms/div", "200kpts", "10.0MSa/s"]} trig={normal("3.13V")} />
      </div>
    </main>
  );
}
